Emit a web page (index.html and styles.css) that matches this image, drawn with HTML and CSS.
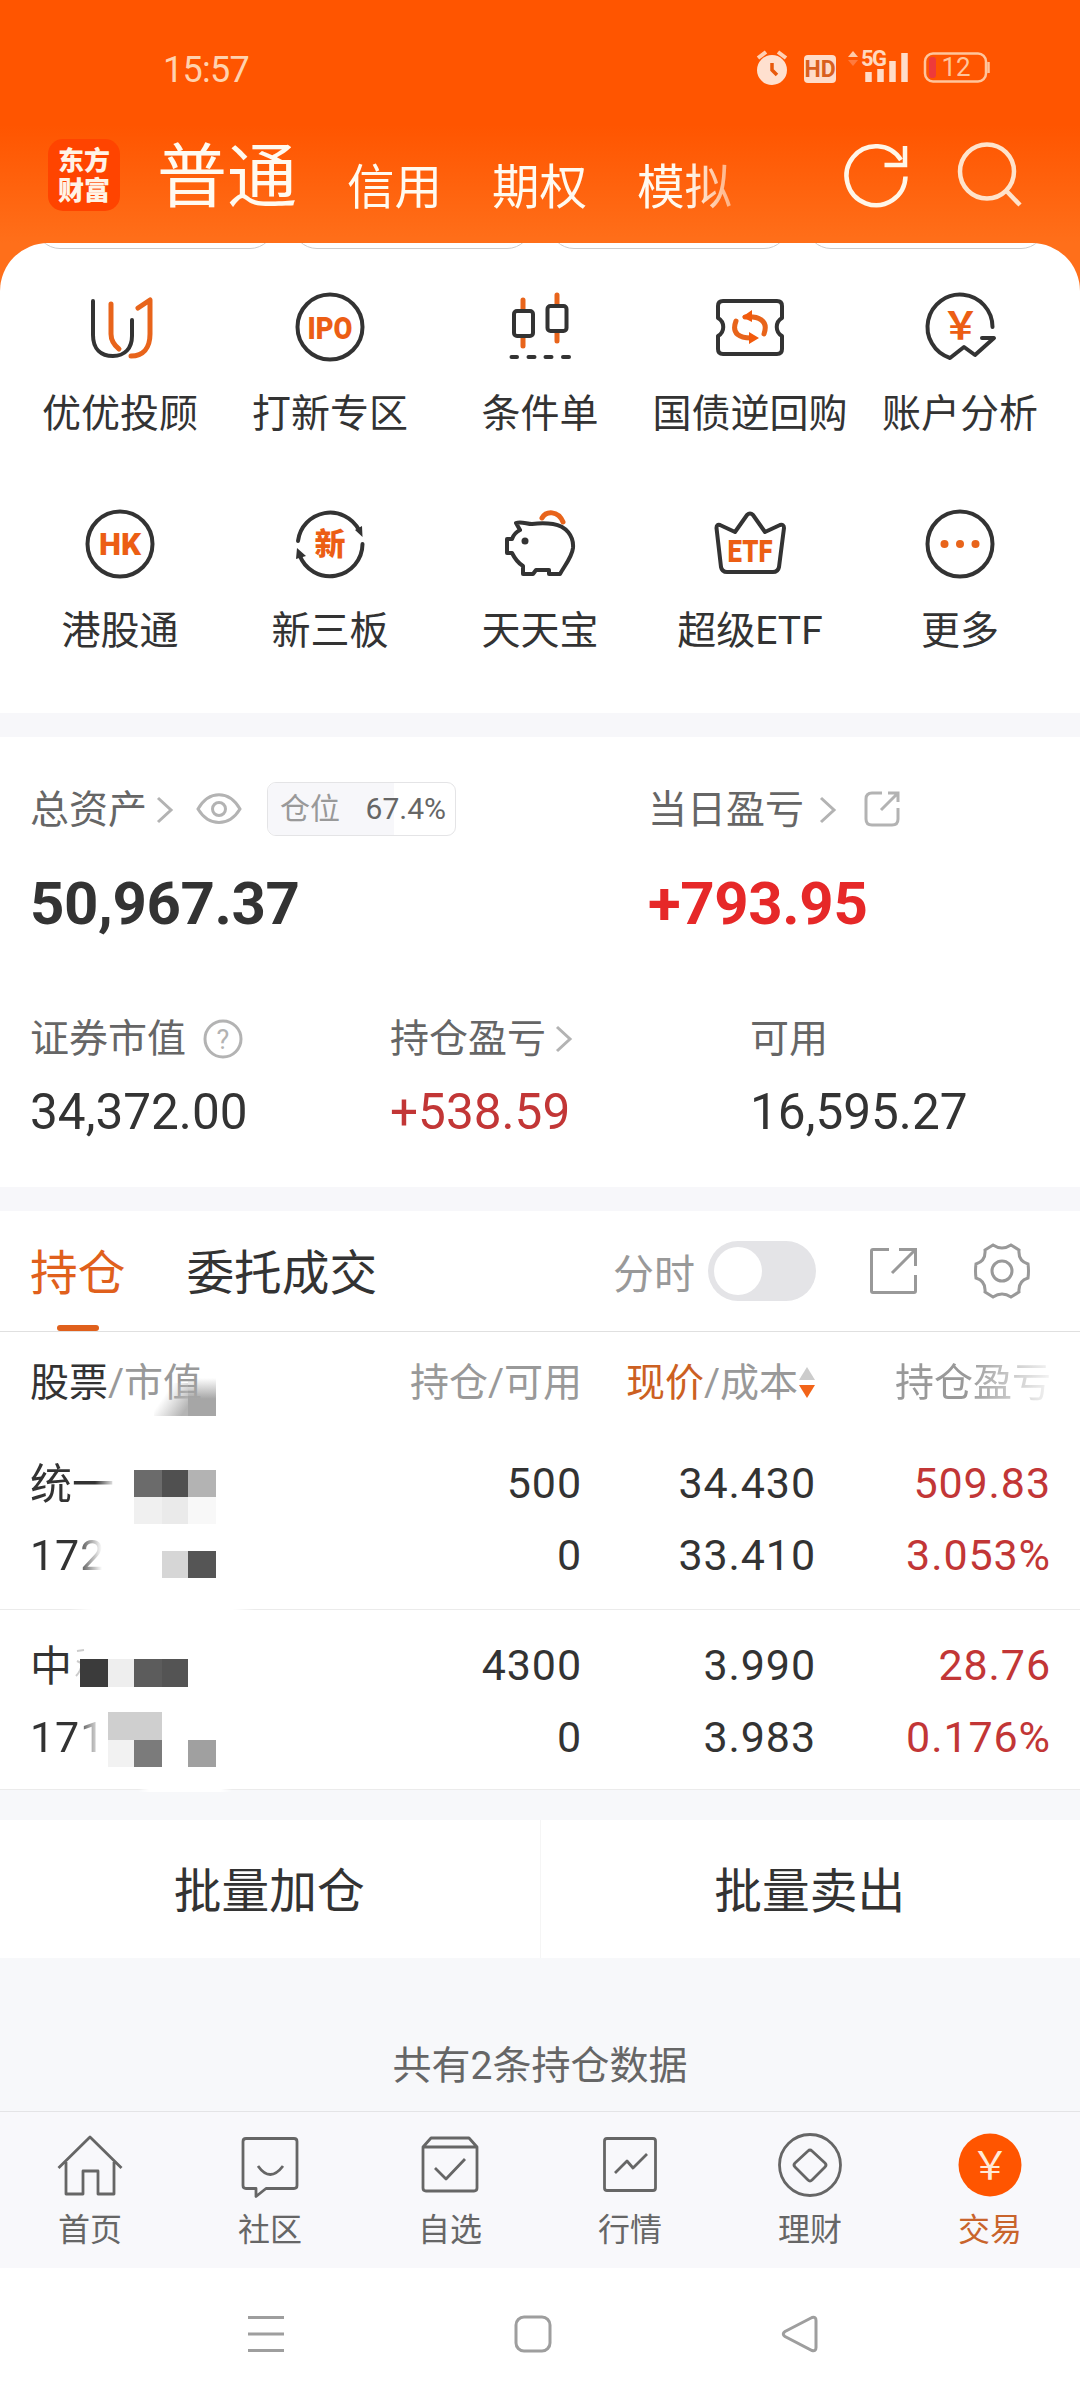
FILE: index.html
```html
<!DOCTYPE html>
<html lang="zh-CN">
<head>
  <meta charset="UTF-8" />
  <meta name="viewport" content="width=device-width, initial-scale=1.0"/>
  <title>东方财富</title>
  <link rel="stylesheet" href="styles.css">
</head>
<body>
  <div class="app">
    <div class="top">
      <div class="status-bar">
        <span class="clock">15:57</span>
        <svg class="status-icons" width="240" height="40" viewBox="0 0 240 40">
          <!-- alarm -->
          <circle cx="22" cy="21" r="15" fill="#ffe0cf"/>
          <path d="M8 9l8-6M36 9l-8-6" stroke="#ffd0b4" stroke-width="4"/>
          <path d="M22 14v7l5 5" stroke="#e8590c" stroke-width="3.5" fill="none"/>
          <!-- HD -->
          <rect x="54" y="6" width="32" height="28" rx="4" fill="#ffdcc8"/>
          <text x="70" y="28" class="hd">HD</text>
          <!-- signal -->
          <path d="M98 8l5-6 5 6z" fill="#ffcba8"/>
          <path d="M98 11l5 6 5-6z" fill="#ff7a3d"/>
          <text x="111" y="17" class="net">5G</text>
          <path d="M118.500 23v10M130.500 20v13M142.500 12v21M154.500 4v29" stroke="#ffdcc8" stroke-width="6.500"/>
          <!-- battery -->
          <rect x="175" y="4.500" width="61" height="28" rx="8" fill="none" stroke="#ffc59c" stroke-width="2.500"/>
          <rect x="179" y="8" width="7" height="21" rx="3" fill="#ee3a3a"/>
          <path d="M238.500 13v11" stroke="#ffc59c" stroke-width="2.500"/>
          <text x="206" y="27" class="level">12</text>
        </svg>
      </div>

      <div class="title-bar">
        <div class="logo">东方<br>财富</div>
        <div class="accounts">
          <span class="current">普通</span>
          <span>信用</span>
          <span>期权</span>
          <span>模拟</span>
        </div>
        <svg class="refresh" width="70" height="70" viewBox="0 0 70 70" fill="none" stroke="#fff6e8" stroke-width="4.500">
          <path d="M61.500 36.500A29.500 29.500 0 1 1 57 20"/>
          <path d="M61 6v19H40.500"/>
        </svg>
        <svg class="search" width="70" height="70" viewBox="0 0 70 70" fill="none" stroke="#ffe3cb" stroke-width="4.500">
          <circle cx="32" cy="31.500" r="27"/>
          <path d="M51 50.500L65 65"/>
        </svg>
      </div>

      <div class="shortcuts">
        <div class="pills"><i></i><i></i><i></i><i></i></div>
        <div class="grid">
          <div class="item">
            <svg width="72" height="72" viewBox="0 0 72 72">
              <path class="ln" d="M9 10v34c0 14 8 21 20 21s19-8 19-20V29"/>
              <path class="or" d="M27 13v30c0 7 3 11 8 15M54 17l12-8v34c0 14-7 22-19 22"/>
            </svg>
            <span>优优投顾</span>
          </div>
          <div class="item">
            <svg width="72" height="72" viewBox="0 0 72 72">
              <circle class="ln" cx="36" cy="36" r="32.500"/>
              <text class="ic" x="36" y="47.500" font-size="32" textLength="45" lengthAdjust="spacingAndGlyphs">IPO</text>
            </svg>
            <span>打新专区</span>
          </div>
          <div class="item">
            <svg width="72" height="72" viewBox="0 0 72 72">
              <path class="or" d="M19 9v10M19 46v9M53 4v10M53 41v9"/>
              <rect class="ln" x="10" y="20" width="19" height="25" rx="3"/>
              <rect class="ln" x="43.500" y="15" width="19" height="25" rx="3"/>
              <path class="ln" d="M7.500 66h5.500M24.500 66h6M41.500 66h6M59 66h6"/>
            </svg>
            <span>条件单</span>
          </div>
          <div class="item">
            <svg width="72" height="72" viewBox="0 0 72 72">
              <path class="ln" d="M9 10h54q5 0 5 5v12c-7 4-7 14 0 18v13q0 5-5 5H9q-5 0-5-5V45c7-4 7-14 0-18V15q0-5 5-5z"/>
              <path class="or" d="M22 30c-5 13 4 17 15 17M31 26c13-1 24 3 19 17"/>
              <path d="M28 26l10-7v12zM45 47l-10 6V41z" fill="#f25a0c"/>
            </svg>
            <span>国债逆回购</span>
          </div>
          <div class="item">
            <svg width="72" height="72" viewBox="0 0 72 72">
              <path class="ln" d="M68.500 36A32.500 32.500 0 1 0 26 67l14-11 11 8 19-17H58"/>
              <text class="ic yen" x="36.500" y="48" font-size="38">&#65509;</text>
            </svg>
            <span>账户分析</span>
          </div>
          <div class="item">
            <svg width="72" height="72" viewBox="0 0 72 72">
              <circle class="ln" cx="36" cy="36" r="32.500"/>
              <text class="ic" x="36" y="47" font-size="32" textLength="42" lengthAdjust="spacingAndGlyphs">HK</text>
            </svg>
            <span>港股通</span>
          </div>
          <div class="item">
            <svg width="72" height="72" viewBox="0 0 72 72">
              <path class="ln" d="M4 33a32.500 32.500 0 0 1 61-11M68.500 36a32.500 32.500 0 0 1-63 11"/>
              <path d="M61 22l7-4 .500 11zM3 40l9 8-10 3z" fill="#333"/>
              <text class="ic" x="36" y="47" font-size="31">新</text>
            </svg>
            <span>新三板</span>
          </div>
          <div class="item">
            <svg width="72" height="72" viewBox="0 0 72 72">
              <path class="or" d="M38 10c4-7 16-8 21 4"/>
              <path class="ln" d="M16 22l-4-7c5-2 11 1 16 1 8-1 14-1 21 0 13 2 21 12 20 24-1 9-8 17-13 26H45v-4H32l-3 4H19v-8c-5-3-8-7-11-13H3V31h5c1-3 4-7 8-9z"/>
              <circle cx="21" cy="33" r="3.500" fill="#333"/>
            </svg>
            <span>天天宝</span>
          </div>
          <div class="item">
            <svg width="72" height="72" viewBox="0 0 72 72">
              <path class="ln" d="M6 17l15 7L33 7q3-3 6 0l12 17 15-7q4-1 4 3l-5 39q-1 5-6 5H13q-5 0-6-5L2.500 20q0-4 3.500-3z"/>
              <text class="ic" x="36" y="54" font-size="32" textLength="45" lengthAdjust="spacingAndGlyphs">ETF</text>
            </svg>
            <span>超级ETF</span>
          </div>
          <div class="item">
            <svg width="72" height="72" viewBox="0 0 72 72">
              <circle class="ln" cx="36" cy="36" r="32.500"/>
              <g fill="#e8641b"><circle cx="20.500" cy="36" r="4"/><circle cx="36" cy="36" r="4"/><circle cx="51.500" cy="36" r="4"/></g>
            </svg>
            <span>更多</span>
          </div>
        </div>
      </div>
    </div>

    <!-- asset summary -->
    <div class="assets">
      <div class="row main">
        <div class="cell">
          <div class="label">
            <span>总资产</span>
            <svg class="chev tight" width="18" height="28" viewBox="0 0 18 28"><path d="M2 2l13 12L2 26"/></svg>
            <svg class="eye" width="46" height="34" viewBox="0 0 46 34"><path d="M2 17C13-2 33-2 44 17 33 35 13 35 2 17z"/><circle cx="23" cy="17" r="6.500"/></svg>
            <div class="ratio"><div class="fill" style="width:67.4%"></div><span>仓位</span><b>67.4%</b></div>
          </div>
          <div class="big">50,967.37</div>
        </div>
        <div class="cell">
          <div class="label">
            <span>当日盈亏</span>
            <svg class="chev wide" width="18" height="28" viewBox="0 0 18 28"><path d="M2 2l13 12L2 26"/></svg>
            <svg class="share" width="36" height="36" viewBox="0 0 36 36"><path d="M18 2H8Q2 2 2 8v20q0 6 6 6h20q6 0 6-6V17M24 2h10v9M34 2L17 19"/></svg>
          </div>
          <div class="big red">+793.95</div>
        </div>
      </div>
      <div class="row sub">
        <div class="cell">
          <div class="label">
            <span>证券市值</span>
            <svg class="help" width="40" height="40" viewBox="0 0 40 40"><circle cx="20" cy="20" r="18"/><text x="20" y="30">?</text></svg>
          </div>
          <div class="num">34,372.00</div>
        </div>
        <div class="cell">
          <div class="label">
            <span>持仓盈亏</span>
            <svg class="chev tight" width="18" height="28" viewBox="0 0 18 28"><path d="M2 2l13 12L2 26"/></svg>
          </div>
          <div class="num red">+538.59</div>
        </div>
        <div class="cell">
          <div class="label"><span>可用</span></div>
          <div class="num">16,595.27</div>
        </div>
      </div>
    </div>

    <!-- holdings -->
    <div class="holdings">
      <div class="tabs">
        <div class="tab active">持仓</div>
        <div class="tab">委托成交</div>
        <span class="mode">分时</span>
        <div class="toggle"></div>
        <svg class="export" width="50" height="50" viewBox="0 0 50 50"><path d="M20 3.500H4q-1.500 0-1.500 1.500v40q0 1.500 1.500 1.500h41q1.500 0 1.500-1.500V29M30 3.500h16.500V20M46 4L23 27"/></svg>
        <svg class="gear" width="58" height="58" viewBox="0 0 58 58"><path d="M20 3q9 6 18 0l8 5q-1 11 9 14 1 7 0 14-10 3-9 14l-8 5q-9-6-18 0l-8-5q1-11-9-14-1-7 0-14 10-3 9-14z"/><circle cx="29" cy="29" r="10"/></svg>
      </div>

      <div class="table">
        <div class="thead">
          <div><em>股票</em>/市值</div>
          <div>持仓/可用</div>
          <div class="sorted"><em>现价</em>/成本<svg width="18" height="36" viewBox="0 0 18 36"><path d="M1 15L9 2l8 13z" fill="#ccc"/><path d="M1 20l8 13 8-13z" fill="#f26419"/></svg></div>
          <div class="fade">持仓盈亏</div>
        </div>
        <div class="stock">
          <div class="name"><span class="cut one">统一</span><span class="cut two">172</span></div>
          <div><span>500</span><span>0</span></div>
          <div><span>34.430</span><span>33.410</span></div>
          <div class="red"><span>509.83</span><span>3.053%</span></div>
        </div>
        <div class="stock">
          <div class="name"><span>中</span><span class="cut two">171</span></div>
          <div><span>4300</span><span>0</span></div>
          <div><span>3.990</span><span>3.983</span></div>
          <div class="red"><span>28.76</span><span>0.176%</span></div>
        </div>

        <!-- mosaic over the stock names -->
        <svg class="mosaic" width="260" height="420" viewBox="0 0 260 420">
          <defs>
            <linearGradient id="smear" x1="0.100" y1="0.100" x2="1" y2="0.700">
              <stop offset="0.300" stop-color="#bbb" stop-opacity="0"/>
              <stop offset="1" stop-color="#b4b4b4"/>
            </linearGradient>
            <linearGradient id="down" x1="0" y1="0" x2="0" y2="1">
              <stop offset="0" stop-color="#a6a6a6" stop-opacity="0"/>
              <stop offset="0.550" stop-color="#a6a6a6"/>
            </linearGradient>
            <linearGradient id="gap" x1="0" y1="0" x2="1" y2="0">
              <stop offset="0" stop-color="#fff" stop-opacity="0"/>
              <stop offset="0.120" stop-color="#fff"/>
              <stop offset="0.880" stop-color="#fff"/>
              <stop offset="1" stop-color="#fff" stop-opacity="0"/>
            </linearGradient>
          </defs>
          <rect x="154" y="11" width="34" height="33" fill="url(#smear)"/>
          <rect x="188" y="6" width="28" height="38" fill="url(#down)"/>
          <rect x="134" y="98" width="28" height="27" fill="#6b6b6b"/>
          <rect x="162" y="98" width="26" height="27" fill="#505050"/>
          <rect x="188" y="98" width="28" height="27" fill="#b3b3b3"/>
          <rect x="134" y="125" width="28" height="27" fill="#f0f0f0"/>
          <rect x="162" y="125" width="26" height="27" fill="#eaeaea"/>
          <rect x="188" y="125" width="28" height="27" fill="#f8f8f8"/>
          <rect x="162" y="179" width="26" height="27" fill="#d6d6d6"/>
          <rect x="188" y="179" width="28" height="27" fill="#555"/>
          <rect x="70" y="234" width="185" height="6" fill="url(#gap)"/>
          <path d="M77 279l7-1M77 289l6 3M76 304q5-5 6-13" stroke="#ccc" stroke-width="2" fill="none"/>
          <rect x="80" y="287" width="28" height="28" fill="#3b3b3b"/>
          <rect x="108" y="287" width="26" height="28" fill="#eee"/>
          <rect x="134" y="287" width="28" height="28" fill="#5c5c5c"/>
          <rect x="162" y="287" width="26" height="28" fill="#545454"/>
          <rect x="108" y="340" width="54" height="28" fill="#cfcfcf"/>
          <rect x="108" y="368" width="26" height="27" fill="#f2f2f2"/>
          <rect x="134" y="368" width="28" height="27" fill="#7b7b7b"/>
          <rect x="188" y="368" width="28" height="27" fill="#a0a0a0"/>
          <rect x="138" y="414" width="94" height="6" fill="url(#gap)"/>
        </svg>
      </div>

      <div class="batch">
        <button>批量加仓</button>
        <button>批量卖出</button>
      </div>
      <p class="count">共有2条持仓数据</p>
    </div>

    <div class="tabbar">
      <div class="tabitem">
        <svg width="72" height="72" viewBox="0 0 72 72"><path d="M4.500 39L36 8l31.500 31M12 33v32h17V42h15v23h16V33"/></svg>
        <span>首页</span>
      </div>
      <div class="tabitem">
        <svg width="72" height="72" viewBox="0 0 72 72"><path d="M12 9.500h48q3 0 3 3v44q0 3-3 3H32l-10 8v-8H12q-3 0-3-3v-44q0-3 3-3zM24 37q12 17 25 0"/></svg>
        <span>社区</span>
      </div>
      <div class="tabitem">
        <svg width="72" height="72" viewBox="0 0 72 72"><path d="M9 18l8-9h38l8 9v41q0 3-3 3H12q-3 0-3-3zM9 18h54M21 39l11 11 19-20"/></svg>
        <span>自选</span>
      </div>
      <div class="tabitem">
        <svg width="72" height="72" viewBox="0 0 72 72"><rect x="10.500" y="9.500" width="51" height="52" rx="2.500"/><path d="M21 44l12-12 6 7 14-14"/></svg>
        <span>行情</span>
      </div>
      <div class="tabitem">
        <svg width="72" height="72" viewBox="0 0 72 72"><circle cx="36" cy="36" r="30.500"/><path d="M34 22q2-2 4 0l13 12q2 2 0 4L38 51q-2 2-4 0L21 38q-2-2 0-4z"/></svg>
        <span>理财</span>
      </div>
      <div class="tabitem on">
        <svg width="72" height="72" viewBox="0 0 72 72"><circle cx="36" cy="36" r="31.500"/><text x="36" y="50">&#65509;</text></svg>
        <span>交易</span>
      </div>
    </div>

    <div class="sysnav">
      <svg width="40" height="40" viewBox="0 0 40 40"><path d="M2 3.500h36M2 20h36M2 36.500h36"/></svg>
      <svg width="40" height="40" viewBox="0 0 40 40"><rect x="3" y="3" width="34" height="34" rx="8"/></svg>
      <svg width="40" height="40" viewBox="0 0 40 40"><path d="M32 3.500L5 17.500q-3.500 2.500 0 5L32 36.500q4 1 4-3v-27q0-4-4-3z"/></svg>
    </div>
  </div>
</body>
</html>
```
FILE: styles.css
```css
* {
  box-sizing: border-box;
}

body {
  margin: 0;
  font-family: Roboto, "Noto Sans CJK SC", sans-serif;
  color: #333;
  background: #fff;
}

svg {
  display: block;
  flex: none;
  overflow: visible;
}

.app {
  width: 1080px;
  height: 2400px;
  overflow: hidden;
}

.red {
  color: #c23636;
}

/* header */
.top {
  background: linear-gradient(#ff5500 0, #ff5500 125px, #ff6f1a 243px);
}

.status-bar {
  height: 138px;
  padding: 0 90px 0 163px;
  display: flex;
  align-items: center;
  justify-content: space-between;
}

.clock {
  margin-top: 2px;
  font-size: 36px;
  letter-spacing: -0.7px;
  color: #ffd2ae;
}

.hd {
  font-size: 23px;
  font-weight: 700;
  fill: #d9601e;
  text-anchor: middle;
}

.net {
  font-size: 22px;
  font-weight: 700;
  letter-spacing: -1.5px;
  fill: #ffd9bf;
}

.level {
  font-size: 26px;
  fill: #ffc59c;
  text-anchor: middle;
}

.title-bar {
  height: 105px;
  padding: 0 55px 31px 48px;
  display: flex;
  align-items: center;
}

.logo {
  width: 72px;
  height: 72px;
  border-radius: 15px;
  background: #ff4400;
  color: #fff3e6;
  font-size: 26px;
  font-weight: 900;
  line-height: 30px;
  text-align: center;
  padding-top: 7px;
}

.accounts {
  flex: 1;
  height: 76px;
  margin-left: 37px;
  display: flex;
  align-items: flex-end;
  gap: 50px;
  color: #fffaf0;
  font-size: 47.5px;
  line-height: 50px;
  -webkit-mask-image: linear-gradient(to right, #000 530px, transparent 620px);
  mask-image: linear-gradient(to right, #000 530px, transparent 620px);
}

.current {
  font-size: 70px;
  line-height: 70px;
}

.search {
  margin-left: 41px;
}

.shortcuts {
  height: 470px;
  background: #fff;
  border-radius: 48px 48px 0 0;
  overflow: hidden;
}

.pills {
  height: 6px;
  display: flex;
  justify-content: center;
  align-items: flex-end;
  gap: 17px;
}

.pills i {
  flex: none;
  width: 240px;
  height: 60px;
  border: 1px solid #ccc;
  border-radius: 25px;
}

.grid {
  display: grid;
  grid-template-columns: repeat(5, 210px);
  grid-auto-rows: 217px;
  justify-content: center;
  padding-top: 42px;
}

.item {
  display: flex;
  flex-direction: column;
  align-items: center;
  font-size: 39px;
  line-height: 50px;
  white-space: nowrap;
}

.item span {
  margin-top: 26px;
}

.ln {
  fill: none;
  stroke: #333;
  stroke-width: 4;
  stroke-linecap: round;
  stroke-linejoin: round;
}

.or {
  fill: none;
  stroke: #e8641b;
  stroke-width: 5;
  stroke-linecap: round;
  stroke-linejoin: round;
}

.ic {
  fill: #ec5e14;
  font-weight: 900;
  text-anchor: middle;
}

.yen {
  font-weight: 700;
}

/* assets */
.assets {
  height: 498px;
  border-top: 24px solid #f7f7fa;
  border-bottom: 24px solid #f7f7fa;
  padding: 45px 0 0 30px;
}

.row {
  display: flex;
}

.main {
  height: 229px;
}

.main .cell {
  width: 618px;
}

.main .cell + .cell {
  width: auto;
}

.sub .cell {
  flex: none;
  width: 360px;
}

.label {
  height: 56px;
  display: flex;
  align-items: center;
  color: #666;
  font-size: 39px;
  line-height: 58px;
}

.chev,
.eye,
.share,
.help {
  fill: none;
  stroke: #b3b3b3;
  stroke-width: 3;
}

.tight {
  margin-left: 9px;
}

.wide {
  margin-left: 15px;
}

.eye {
  margin-left: 22px;
  margin-top: -3px;
}

.share {
  margin-left: 27px;
  margin-top: -2px;
}

.help {
  margin-left: 17px;
}

.help text {
  fill: #b3b3b3;
  stroke: none;
  font-size: 27px;
  text-anchor: middle;
}

.ratio {
  position: relative;
  width: 189px;
  height: 54px;
  margin-top: -2px;
  margin-left: 25px;
  padding: 0 9px 0 12px;
  border: 1px solid #e4e4e6;
  border-radius: 9px;
  display: flex;
  justify-content: space-between;
  align-items: center;
  overflow: hidden;
  font-size: 30px;
  color: #999;
}

.ratio span,
.ratio b {
  position: relative;
  font-weight: 400;
}

.ratio b {
  color: #666;
}

.fill {
  position: absolute;
  left: 0;
  top: 0;
  bottom: 0;
  background: #f7f7fa;
}

.big {
  margin-top: 31px;
  font-size: 60px;
  font-weight: 700;
  line-height: 70px;
  letter-spacing: -0.4px;
}

.big.red {
  color: #e62828;
}

.num {
  margin-top: 15px;
  font-size: 49.5px;
  line-height: 60px;
}

/* holdings */
.holdings {
  background: #f7f8fa;
}

.tabs {
  height: 121px;
  padding: 0 49px 0 30px;
  display: flex;
  align-items: center;
  background: #fff;
  border-bottom: 1px solid #e0e0e0;
}

.tab {
  position: relative;
  height: 120px;
  line-height: 126px;
  font-size: 47.7px;
  margin-right: 61px;
}

.tab.active {
  color: #e0601c;
}

.tab.active::after {
  content: "";
  position: absolute;
  left: 27px;
  bottom: 0;
  width: 42px;
  height: 6px;
  border-radius: 3px;
  background: #e0601c;
}

.mode {
  margin-left: auto;
  font-size: 41px;
  color: #999;
}

.toggle {
  width: 108px;
  height: 60px;
  margin-left: 13px;
  border-radius: 30px;
  background: #e4e4e7;
  padding: 6px;
}

.toggle::before {
  content: "";
  display: block;
  width: 48px;
  height: 48px;
  border-radius: 50%;
  background: #fff;
}

.export,
.gear {
  fill: none;
  stroke: #999;
  stroke-width: 3;
}

.export {
  margin-left: 53px;
}

.gear {
  margin-left: 54px;
}

.table {
  position: relative;
  height: 458px;
  background: #fff;
  border-bottom: 1px solid #ebebeb;
}

.thead,
.stock {
  display: grid;
  grid-template-columns: 261px 291px 234px 235px;
  padding-left: 30px;
}

.thead {
  height: 98px;
  line-height: 102px;
  font-size: 39px;
  color: #999;
}

.thead div:nth-child(n + 2),
.stock div:nth-child(n + 2) {
  text-align: right;
}

.thead em {
  font-style: normal;
  color: #333;
}

.thead .sorted {
  display: flex;
  justify-content: flex-end;
  align-items: center;
}

.thead .sorted em {
  color: #cc6022;
}

.fade {
  -webkit-mask-image: linear-gradient(to right, #000 150px, rgba(0, 0, 0, 0.1) 235px);
  mask-image: linear-gradient(to right, #000 150px, rgba(0, 0, 0, 0.1) 235px);
}

.stock {
  height: 179px;
  padding-top: 17px;
  font-size: 43px;
  line-height: 72px;
  letter-spacing: 0.9px;
}

.stock + .stock {
  border-top: 1px solid #ebebeb;
  padding-top: 19px;
}

.stock span {
  display: block;
}

.stock .name span:first-child {
  height: 72px;
  line-height: 75px;
  font-size: 42px;
  letter-spacing: 0;
}

.cut.one {
  -webkit-mask-image: linear-gradient(to right, #000 65px, transparent 86px);
  mask-image: linear-gradient(to right, #000 65px, transparent 86px);
}

.cut.two {
  -webkit-mask-image: linear-gradient(to right, #000 46px, transparent 72px);
  mask-image: linear-gradient(to right, #000 46px, transparent 72px);
}

.mosaic {
  position: absolute;
  left: 0;
  top: 40px;
}

.batch {
  display: flex;
  padding-top: 30px;
}

.batch button {
  flex: 1;
  height: 138px;
  padding: 0 1px 3px 0;
  border: none;
  background: #fff;
  color: #333;
  font-family: inherit;
  font-size: 47.7px;
}

.batch button + button {
  border-left: 1px solid #f5f5f5;
}

.count {
  margin: 0;
  height: 153px;
  padding-top: 81px;
  text-align: center;
  font-size: 39px;
  line-height: 54px;
  color: #666;
}

/* bottom bars */
.tabbar {
  height: 157px;
  display: flex;
  background: #f8f8fb;
  border-top: 1px solid #e4e4e6;
}

.tabitem {
  flex: 1;
  display: flex;
  flex-direction: column;
  align-items: center;
  padding-top: 17px;
  font-size: 32px;
  line-height: 40px;
  color: #666;
}

.tabitem svg {
  fill: none;
  stroke: #666;
  stroke-width: 2.8;
  stroke-linejoin: round;
}

.tabitem span {
  margin-top: 9px;
}

.tabitem.on {
  color: #c9642c;
}

.tabitem.on svg {
  fill: #ff5500;
  stroke: none;
}

.tabitem.on text {
  fill: #ffe9d6;
  font-size: 39px;
  text-anchor: middle;
}

.sysnav {
  height: 132px;
  padding: 0 260px 0 246px;
  display: flex;
  justify-content: space-between;
  align-items: center;
  background: #fff;
}

.sysnav svg {
  fill: none;
  stroke: #9e9e9e;
  stroke-width: 3;
}
```
